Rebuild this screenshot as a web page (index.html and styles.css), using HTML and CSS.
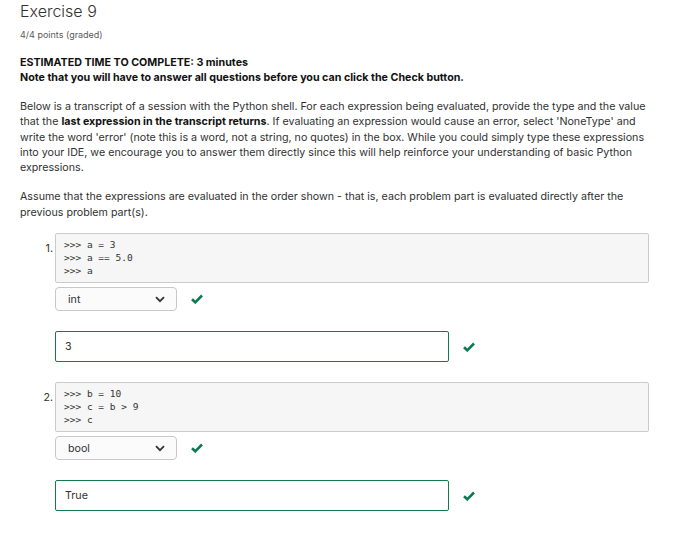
FILE: index.html
```html
<!DOCTYPE html>
<html>
<head>
<meta charset="utf-8">
<link rel="stylesheet" href="styles.css">
</head>
<body>
<div class="page">
  <h2 class="title">Exercise 9</h2>
  <div class="points">4/4 points (graded)</div>
  <p class="intro"><strong>ESTIMATED TIME TO COMPLETE: 3 minutes</strong><br><strong>Note that you will have to answer all questions before you can click the Check button.</strong></p>
  <p class="para">Below is a transcript of a session with the Python shell. For each expression being evaluated, provide the type and the value that the <strong>last expression in the transcript returns</strong>. If evaluating an expression would cause an error, select 'NoneType' and write the word 'error' (note this is a word, not a string, no quotes) in the box. While you could simply type these expressions into your IDE, we encourage you to answer them directly since this will help reinforce your understanding of basic Python expressions.</p>
  <p class="para">Assume that the expressions are evaluated in the order shown - that is, each problem part is evaluated directly after the previous problem part(s).</p>

  <div class="problem">
    <div class="num">1.</div>
    <div class="body">
      <pre class="code">&gt;&gt;&gt; a = 3
&gt;&gt;&gt; a == 5.0
&gt;&gt;&gt; a</pre>
      <div class="row">
        <div class="select"><span>int</span><svg class="chev" width="10" height="7" viewBox="0 0 10 7"><path d="M1 1.2 L5 5.2 L9 1.2" fill="none" stroke="#333" stroke-width="1.8"/></svg></div>
        <svg class="check" width="12" height="10" viewBox="0 0 12 10"><path d="M1 5.2 L4.3 8.3 L11 1.5" fill="none" stroke="#0b7a4f" stroke-width="2.6"/></svg>
      </div>
      <div class="row row-input">
        <div class="input">3</div>
        <svg class="check" width="12" height="10" viewBox="0 0 12 10"><path d="M1 5.2 L4.3 8.3 L11 1.5" fill="none" stroke="#0b7a4f" stroke-width="2.6"/></svg>
      </div>
    </div>
  </div>

  <div class="problem">
    <div class="num">2.</div>
    <div class="body">
      <pre class="code">&gt;&gt;&gt; b = 10
&gt;&gt;&gt; c = b &gt; 9
&gt;&gt;&gt; c</pre>
      <div class="row">
        <div class="select"><span>bool</span><svg class="chev" width="10" height="7" viewBox="0 0 10 7"><path d="M1 1.2 L5 5.2 L9 1.2" fill="none" stroke="#333" stroke-width="1.8"/></svg></div>
        <svg class="check" width="12" height="10" viewBox="0 0 12 10"><path d="M1 5.2 L4.3 8.3 L11 1.5" fill="none" stroke="#0b7a4f" stroke-width="2.6"/></svg>
      </div>
      <div class="row row-input">
        <div class="input">True</div>
        <svg class="check" width="12" height="10" viewBox="0 0 12 10"><path d="M1 5.2 L4.3 8.3 L11 1.5" fill="none" stroke="#0b7a4f" stroke-width="2.6"/></svg>
      </div>
    </div>
  </div>
</div>
</body>
</html>
```
FILE: styles.css
```css
* { box-sizing: border-box; }
body {
  margin: 0;
  background: #fff;
  font-family: Inter, "Noto Sans", sans-serif;
  color: #313131;
}
.page {
  width: 649px;
  padding: 0 0 0 20px;
}
.title {
  margin: 0;
  padding-top: 1px;
  font-size: 16px;
  line-height: 20px;
  font-weight: 300;
  color: #313131;
}
.points {
  margin-top: 8px;
  font-size: 9px;
  line-height: 12px;
  color: #5a5a5a;
}
.intro {
  margin: 14px 0 0;
  font-size: 10.7px;
  line-height: 15px;
}
.intro strong { font-weight: 700; color: #111; }
.para {
  margin: 14px 0 0;
  font-size: 10.7px;
  line-height: 15.3px;
  color: #313131;
}
.para strong { font-weight: 700; color: #111; }
.problem {
  display: flex;
  margin-top: 13px;
}
.problem + .problem { margin-top: 20px; }
.num {
  width: 35px;
  text-align: right;
  padding-right: 2px;
  padding-top: 9px;
  font-size: 10.7px;
  line-height: 13px;
}
.body { flex: 1; }
.code {
  margin: 0;
  width: 594px;
  height: 50px;
  padding: 4px 8px;
  background: #f6f6f6;
  border: 1px solid #cbcbcb;
  border-radius: 2px;
  font-family: "DejaVu Sans Mono", monospace;
  font-size: 9.5px;
  line-height: 13px;
  color: #333;
}
.row {
  display: flex;
  align-items: center;
  margin-top: 4px;
}
.row-input { margin-top: 20px; }
.select {
  width: 122px;
  height: 24px;
  border: 1px solid #c8c8c8;
  border-radius: 4px;
  background: #fbfbfb;
  display: flex;
  align-items: center;
  justify-content: space-between;
  padding: 0 11px 0 12px;
  font-size: 10.7px;
  color: #333;
}
.chev { display: block; }
.check { display: block; margin-left: 14px; }
.input {
  width: 394px;
  height: 31px;
  border: 1px solid #137a4c;
  border-radius: 2px;
  display: flex;
  align-items: center;
  padding: 0 9px;
  font-size: 10.7px;
  color: #333;
}
```
